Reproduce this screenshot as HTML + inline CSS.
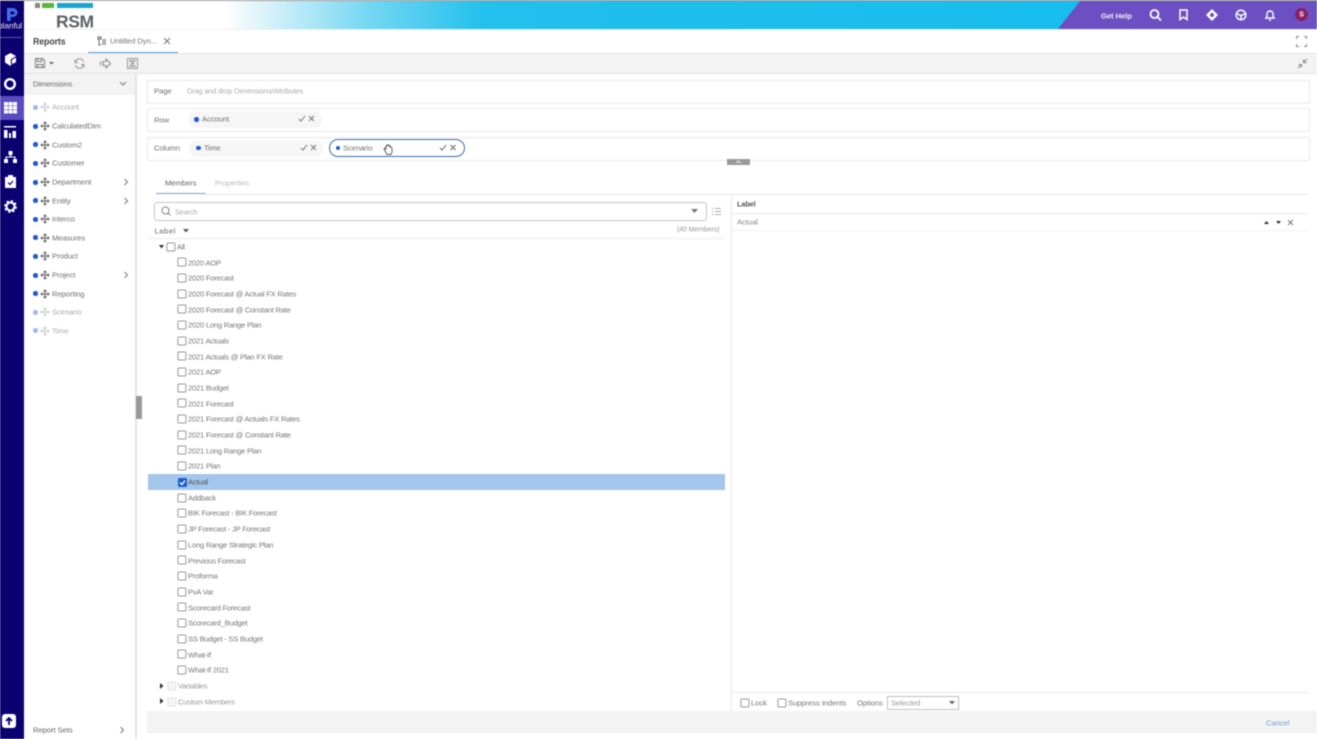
<!DOCTYPE html>
<html><head><meta charset="utf-8">
<style>
html,body{margin:0;padding:0;background:#fff;}
#p{position:relative;width:1317px;height:739px;overflow:hidden;background:#fff;font-family:"Liberation Sans",sans-serif;font-size:7.700px;letter-spacing:-.1px;color:#666;filter:blur(.4px);}
#p div,#p span,#p svg{position:absolute;}
.t{white-space:nowrap;line-height:12px;transform:translateY(.7px);}
.r{left:188px;white-space:nowrap;line-height:12px;color:#777;font-size:7.600px;letter-spacing:-.22px;transform:translateY(.7px);}
.c{left:178px;width:7px;height:7px;border:1px solid #9a9a9a;border-radius:1.500px;background:#fff;transform:translate(-.6px,-.5px);}
.d{left:33px;width:4.500px;height:4.500px;border-radius:50%;background:#1f5bd0;}
.dl{left:33px;width:4.500px;height:4.500px;border-radius:50%;background:#a3bbec;}
.n{left:52px;white-space:nowrap;line-height:12px;color:#707070;transform:translateY(.7px);}
.nl{left:52px;white-space:nowrap;line-height:12px;color:#aaa;transform:translateY(.7px);}
.m{left:40px;width:10px;height:10px;}
.box{left:147px;right:7px;height:22px;border:1px solid #e8e8e8;border-radius:2px;background:#fff;}
.chip{height:17px;border-radius:9px;background:#f6f6f6;}
.dot{width:4.500px;height:4.500px;border-radius:50%;background:#1f5bd0;}
</style></head><body>
<div id="p">
<!-- header -->
<div style="left:0;top:0;width:1317px;height:1px;background:#999"></div>
<div style="left:215px;top:1px;width:1102px;height:28px;background:linear-gradient(90deg,#fff 0,#fff 10px,#c6edf8 70px,#6fd6f2 160px,#22c0ed 270px,#12bcec 100%)"></div>
<svg style="left:1050px;top:1px" width="267" height="28"><polygon points="8,28 30,0 267,0 267,28" fill="#6c4fc2"/></svg>
<div style="left:0;top:29px;width:1317px;height:1px;background:#eee"></div>
<!-- logo -->
<div style="left:35px;top:3px;width:5px;height:5px;background:#888"></div>
<div style="left:42px;top:3px;width:12px;height:5px;background:#5cb33f"></div>
<div style="left:57px;top:3px;width:36px;height:5px;background:#1ba5cf"></div>
<div class="t" style="left:56px;top:11px;font-size:17.500px;line-height:20px;font-weight:bold;color:#5d6367;letter-spacing:-.4px">RSM</div>
<!-- header right -->
<div class="t" style="left:1101px;top:9.500px;color:#eee;font-weight:bold;font-size:7.700px">Get Help</div>
<svg style="left:1149px;top:8px" width="13" height="14" fill="none" stroke="#fff" stroke-width="1.800"><circle cx="5.500" cy="6" r="4"/><path d="M8.500 9l3.500 3.500"/></svg>
<svg style="left:1178px;top:9px" width="11" height="12" fill="none" stroke="#fff" stroke-width="1.500"><path d="M2 1h7v9.500L5.500 8 2 10.500z"/></svg>
<svg style="left:1206px;top:9px" width="12" height="12"><path d="M6 0L12 6 6 12 0 6z" fill="#fff"/><circle cx="6" cy="6" r="2" fill="#6c4fc2"/></svg>
<svg style="left:1235px;top:9px" width="12" height="12" fill="none" stroke="#fff" stroke-width="1.500"><circle cx="6" cy="6" r="4.800"/><path d="M1.500 4.500L6 6.500l4.500-2M6 6.500V11"/></svg>
<svg style="left:1264px;top:9px" width="12" height="12" fill="none" stroke="#fff" stroke-width="1.400"><path d="M2 9c1-1 1-2 1-4a3 3 0 016 0c0 2 0 3 1 4zM5 11h2"/></svg>
<div style="left:1295px;top:8px;width:13px;height:13px;border-radius:50%;background:#8a1f63"></div>
<div class="t" style="left:1295px;top:8.500px;width:13px;text-align:center;color:#fff;font-size:7px;font-weight:bold">S</div>
<!-- tabs -->
<div class="t" style="left:33px;top:34.500px;font-size:8.800px;font-weight:bold;color:#444">Reports</div>
<svg style="left:97px;top:36px" width="10" height="10" fill="none" stroke="#666"><path d="M1 1h3v2H1zM5 4h4M5 6h4M5 8h4M2 3v6h2"/></svg>
<div class="t" style="left:110px;top:35px;color:#777">Untitled Dyn...</div>
<svg style="left:163px;top:37px" width="8" height="8" stroke="#777" fill="none"><path d="M1 1l6 6M7 1L1 7"/></svg>
<div style="left:88px;top:52px;width:90px;height:1px;background:#5b9bd5"></div>
<div style="left:0;top:53px;width:1317px;height:1px;background:#e6e6e6"></div>
<svg style="left:1296px;top:36px" width="11" height="11" fill="none" stroke="#888"><path d="M.5 3V.5H3M8 .5h2.500V3M10.500 8v2.500H8M3 10.500H.5V8"/></svg>
<!-- toolbar -->
<div style="left:24px;top:54px;width:1293px;height:19px;background:#f3f3f3;border-bottom:1px solid #e3e3e3"></div>
<svg style="left:35px;top:58px" width="20" height="10" fill="none" stroke="#777"><path d="M.5.500h7l2 2v7h-9z"/><path d="M2.500 .5v3h4v-3M2.500 9.500v-3h5v3"/><path d="M14 4h5l-2.500 2.500z" fill="#666" stroke="none"/></svg>
<svg style="left:74px;top:58px" width="11" height="11" fill="none" stroke="#999"><path d="M9.500 4A4 4 0 002 3L1 4.500M1.500 7A4 4 0 009 8l1-1.500M1 1.500v3h3M10 9.500v-3H7"/></svg>
<svg style="left:100px;top:58px" width="11" height="11" fill="none" stroke="#888"><path d="M3 3.500h3V1l4.500 4.500L6 10V7.500H3zM.5 3.500v4"/></svg>
<svg style="left:127px;top:58px" width="11" height="11" fill="none" stroke="#999"><rect x=".5" y=".5" width="10" height="10" fill="#eee"/><path d="M3 2.500h5L5.500 5.500 8 8.500H3l2.500-3z"/></svg>
<svg style="left:1297px;top:58px" width="11" height="11" fill="none" stroke="#888"><path d="M10 1L6.500 4.500M6.500 1.500v3h3M1 10l3.500-3.500M1.500 6.500h3v3"/></svg>
<!-- left rail -->
<div style="left:0;top:1px;width:24px;height:738px;background:#0c0070"></div>
<svg style="left:5px;top:7px" width="13" height="15"><path d="M2 1h6a4.500 4.500 0 010 9H5.500v4H2z" fill="#3f6fe8"/><path d="M5.500 4.500H8a1.500 1.500 0 010 3H5.500z" fill="#0c0070"/></svg>
<div class="t" style="left:-2px;top:19.500px;color:#e8e8f5;font-size:8.200px;width:26px;overflow:hidden;letter-spacing:0">planful</div>
<div style="left:0;top:37px;width:22px;height:1px;background:#5a5a9a"></div>
<div style="left:0;top:96px;width:24px;height:24px;background:#5a4cc0"></div>
<svg style="left:4px;top:53px" width="13" height="13"><path d="M6.500 0l5.500 3v6.500L6.500 13 1 9.500V3z" fill="#fff"/><path d="M6.500 6.500L12 3v6.500L7 13z" fill="#0c0070" opacity=".85"/><path d="M8 7l4-2.500v4.500L8 11z" fill="#fff"/></svg>
<svg style="left:3px;top:77px" width="14" height="14" fill="none" stroke="#fff" stroke-width="2.400"><circle cx="7" cy="7" r="4.800"/></svg>
<svg style="left:4px;top:102px" width="13" height="12" fill="#fff"><path d="M0 0h4v3.500H0zM4.500 0h4v3.500h-4zM9 0h4v3.500H9zM0 4h4v3.500H0zM4.500 4h4v3.500h-4zM9 4h4v3.500H9zM0 8h4v3.500H0zM4.500 8h4v3.500h-4zM9 8h4v3.500H9z"/></svg>
<svg style="left:4px;top:126px" width="12" height="12" fill="#fff"><path d="M0 0h12v1.500H0zM0 4h3.500v8H0zM5 7h2v5H5zM8.500 5H12v7H8.500z"/></svg>
<svg style="left:4px;top:151px" width="13" height="12" fill="#fff"><path d="M4.500 0h4v4H7v1.500h4.500V8H13v4H9V8h1.500V6.500h-8V8H4v4H0V8h1.500V5.500H6V4H4.500z"/></svg>
<svg style="left:5px;top:175px" width="11" height="13"><path d="M0 2h3V0h5v2h3v11H0z" fill="#fff"/><path d="M3 7.500l2 2 3-3.500" fill="none" stroke="#0c0070" stroke-width="1.200"/></svg>
<svg style="left:4px;top:200px" width="13" height="13"><circle cx="6.500" cy="6.500" r="4" fill="none" stroke="#fff" stroke-width="2"/><circle cx="6.500" cy="6.500" r="5.600" fill="none" stroke="#fff" stroke-width="1.600" stroke-dasharray="2.400 2"/></svg>
<div style="left:2px;top:714px;width:14px;height:14px;border-radius:3px;background:#fff"></div>
<svg style="left:4px;top:716px" width="10" height="10" fill="none" stroke="#0c0070" stroke-width="1.800"><path d="M5 9V2M2 5l3-3 3 3"/></svg>
<!-- sidebar -->
<div style="left:24px;top:74px;width:111px;height:21px;background:#f3f3f3"></div>
<div class="t" style="left:33px;top:78px;color:#666">Dimensions</div>
<svg style="left:119px;top:81px" width="8" height="6" fill="none" stroke="#777"><path d="M1 1l3 3 3-3"/></svg>
<div style="left:135px;top:74px;width:1.500px;height:665px;background:#e2e2e2"></div>
<div style="left:135.500px;top:396px;width:6px;height:23px;background:#999"></div>

<div class="dl" style="top:105px"></div><div class="nl" style="top:101px">Account</div>
<div class="d" style="top:124px"></div><div class="n" style="top:120px">CalculatedDim</div>
<div class="d" style="top:142px"></div><div class="n" style="top:138.500px">Custom2</div>
<div class="d" style="top:161px"></div><div class="n" style="top:157px">Customer</div>
<div class="d" style="top:180px"></div><div class="n" style="top:176px">Department</div>
<div class="d" style="top:198px"></div><div class="n" style="top:194.500px">Entity</div>
<div class="d" style="top:217px"></div><div class="n" style="top:213px">Interco</div>
<div class="d" style="top:235px"></div><div class="n" style="top:232px">Measures</div>
<div class="d" style="top:254px"></div><div class="n" style="top:250px">Product</div>
<div class="d" style="top:273px"></div><div class="n" style="top:269px">Project</div>
<div class="d" style="top:291px"></div><div class="n" style="top:287.500px">Reporting</div>
<div class="dl" style="top:310px"></div><div class="nl" style="top:306px">Scenario</div>
<div class="dl" style="top:328px"></div><div class="nl" style="top:324.500px">Time</div>

<svg class="m" style="top:102px" fill="none" stroke="#ccc"><path d="M5 1v8M1 5h8M3.500 2.500L5 1l1.500 1.500M3.500 7.500L5 9l1.500-1.500M2.500 3.500L1 5l1.500 1.500M7.500 3.500L9 5 7.500 6.500"/></svg>
<svg class="m" style="top:121px" fill="none" stroke="#666"><path d="M5 1v8M1 5h8M3.500 2.500L5 1l1.500 1.500M3.500 7.500L5 9l1.500-1.500M2.500 3.500L1 5l1.500 1.500M7.500 3.500L9 5 7.500 6.500"/></svg>
<svg class="m" style="top:139.500px" fill="none" stroke="#666"><path d="M5 1v8M1 5h8M3.500 2.500L5 1l1.500 1.500M3.500 7.500L5 9l1.500-1.500M2.500 3.500L1 5l1.500 1.500M7.500 3.500L9 5 7.500 6.500"/></svg>
<svg class="m" style="top:158px" fill="none" stroke="#666"><path d="M5 1v8M1 5h8M3.500 2.500L5 1l1.500 1.500M3.500 7.500L5 9l1.500-1.500M2.500 3.500L1 5l1.500 1.500M7.500 3.500L9 5 7.500 6.500"/></svg>
<svg class="m" style="top:177px" fill="none" stroke="#666"><path d="M5 1v8M1 5h8M3.500 2.500L5 1l1.500 1.500M3.500 7.500L5 9l1.500-1.500M2.500 3.500L1 5l1.500 1.500M7.500 3.500L9 5 7.500 6.500"/></svg>
<svg class="m" style="top:195.500px" fill="none" stroke="#666"><path d="M5 1v8M1 5h8M3.500 2.500L5 1l1.500 1.500M3.500 7.500L5 9l1.500-1.500M2.500 3.500L1 5l1.500 1.500M7.500 3.500L9 5 7.500 6.500"/></svg>
<svg class="m" style="top:214px" fill="none" stroke="#666"><path d="M5 1v8M1 5h8M3.500 2.500L5 1l1.500 1.500M3.500 7.500L5 9l1.500-1.500M2.500 3.500L1 5l1.500 1.500M7.500 3.500L9 5 7.500 6.500"/></svg>
<svg class="m" style="top:233px" fill="none" stroke="#666"><path d="M5 1v8M1 5h8M3.500 2.500L5 1l1.500 1.500M3.500 7.500L5 9l1.500-1.500M2.500 3.500L1 5l1.500 1.500M7.500 3.500L9 5 7.500 6.500"/></svg>
<svg class="m" style="top:251px" fill="none" stroke="#666"><path d="M5 1v8M1 5h8M3.500 2.500L5 1l1.500 1.500M3.500 7.500L5 9l1.500-1.500M2.500 3.500L1 5l1.500 1.500M7.500 3.500L9 5 7.500 6.500"/></svg>
<svg class="m" style="top:270px" fill="none" stroke="#666"><path d="M5 1v8M1 5h8M3.500 2.500L5 1l1.500 1.500M3.500 7.500L5 9l1.500-1.500M2.500 3.500L1 5l1.500 1.500M7.500 3.500L9 5 7.500 6.500"/></svg>
<svg class="m" style="top:288.500px" fill="none" stroke="#666"><path d="M5 1v8M1 5h8M3.500 2.500L5 1l1.500 1.500M3.500 7.500L5 9l1.500-1.500M2.500 3.500L1 5l1.500 1.500M7.500 3.500L9 5 7.500 6.500"/></svg>
<svg class="m" style="top:307px" fill="none" stroke="#ccc"><path d="M5 1v8M1 5h8M3.500 2.500L5 1l1.500 1.500M3.500 7.500L5 9l1.500-1.500M2.500 3.500L1 5l1.500 1.500M7.500 3.500L9 5 7.500 6.500"/></svg>
<svg class="m" style="top:325.500px" fill="none" stroke="#ccc"><path d="M5 1v8M1 5h8M3.500 2.500L5 1l1.500 1.500M3.500 7.500L5 9l1.500-1.500M2.500 3.500L1 5l1.500 1.500M7.500 3.500L9 5 7.500 6.500"/></svg>

<svg style="left:123px;top:178px" width="6" height="8" fill="none" stroke="#777"><path d="M1.500 1l3 3-3 3"/></svg>
<svg style="left:123px;top:197px" width="6" height="8" fill="none" stroke="#777"><path d="M1.500 1l3 3-3 3"/></svg>
<svg style="left:123px;top:271px" width="6" height="8" fill="none" stroke="#777"><path d="M1.500 1l3 3-3 3"/></svg>
<div class="t" style="left:33px;top:724px;color:#666">Report Sets</div>
<svg style="left:119px;top:726px" width="6" height="8" fill="none" stroke="#777"><path d="M1.500 1l3 3-3 3"/></svg>

<!-- drop boxes -->
<div class="box" style="top:80px"></div>
<div class="box" style="top:108px"></div>
<div class="box" style="top:137px"></div>
<div class="t" style="left:154px;top:85px;color:#707070">Page</div>
<div class="t" style="left:187px;top:85px;color:#aaa;font-size:7.300px">Drag and drop Dimensions/Attributes</div>
<div class="t" style="left:154px;top:113.500px;color:#707070">Row</div>
<div class="t" style="left:154px;top:142px;color:#707070">Column</div>
<div class="chip" style="left:188px;top:111px;width:134px"></div>
<div class="dot" style="left:194px;top:117px"></div>
<div class="t" style="left:202px;top:113px;color:#707070">Account</div>
<svg style="left:298px;top:115px" width="18" height="8" fill="none" stroke="#777"><path d="M1 4l2 2 4-5"/><path d="M11 1l5 5M16 1l-5 5"/></svg>
<div class="chip" style="left:189px;top:139.500px;width:134px"></div>
<div class="dot" style="left:196px;top:145.500px"></div>
<div class="t" style="left:204px;top:142px;color:#707070">Time</div>
<svg style="left:300px;top:144px" width="18" height="8" fill="none" stroke="#777"><path d="M1 4l2 2 4-5"/><path d="M11 1l5 5M16 1l-5 5"/></svg>
<div style="left:329px;top:139px;width:134px;height:16px;border:1.300px solid #3b6ea8;border-radius:9px;background:#fff"></div>
<div class="dot" style="left:335.500px;top:145.500px"></div>
<div class="t" style="left:343px;top:142px;color:#707070">Scenario</div>
<svg style="left:439px;top:144px" width="19" height="8" fill="none" stroke="#666"><path d="M1 4l2 2 4-5"/><path d="M11.500 1l5 5M16.500 1l-5 5"/></svg>
<svg style="left:383px;top:143px" width="11" height="13" fill="#fff" stroke="#555" stroke-width=".9"><path d="M2 8L1 6l1-1 1 1V3h1V2h1v0h1v1h1v1h1l1 1v4l-1 2.500H4z"/></svg>
<div style="left:727px;top:159px;width:23px;height:6px;background:#999"></div>
<svg style="left:735px;top:160px" width="7" height="4" fill="none" stroke="#eee"><path d="M1 3l2.500-2L6 3"/></svg>
<!-- tabs -->
<div class="t" style="left:165px;top:177px;color:#666">Members</div>
<div class="t" style="left:215px;top:177px;color:#bbb">Properties</div>
<div style="left:156px;top:193px;width:50px;height:1px;background:#7aa6dc"></div>
<div style="left:206px;top:194px;width:1102px;height:1px;background:#e6e6e6"></div>
<!-- search -->
<div style="left:154px;top:202px;width:551px;height:17px;border:1px solid #c6c6c6;border-radius:3px;background:#fff"></div>
<svg style="left:161px;top:206px" width="10" height="10" fill="none" stroke="#888"><circle cx="4.500" cy="4.500" r="3.500"/><path d="M7 7l2.500 2.500"/></svg>
<div class="t" style="left:175px;top:206px;color:#aaa;font-size:7.300px">Search</div>
<svg style="left:691px;top:209px" width="7" height="4"><path d="M0 0h7L3.500 4z" fill="#777"/></svg>
<svg style="left:712px;top:207px" width="9" height="9" fill="none" stroke="#aaa"><path d="M0 1.500h1.500M3 1.500h6M0 4.500h1.500M3 4.500h6M0 7.500h1.500M3 7.500h6"/></svg>
<div class="t" style="left:154.500px;top:225px;color:#666;letter-spacing:.5px">Label</div>
<svg style="left:183px;top:229px" width="6" height="4"><path d="M0 0h6L3 3.500z" fill="#555"/></svg>
<div class="t" style="left:677px;top:224px;color:#999;font-size:7px">(40 Members)</div>
<div style="left:147px;top:238px;width:578px;height:1px;background:#ededed"></div>
<!-- tree -->
<svg style="left:158.500px;top:245px" width="5" height="4"><path d="M0 0h5L2.500 3.500z" fill="#333"/></svg>
<div class="c" style="left:167px;top:243px"></div><div class="r" style="left:177px;top:241px">All</div>
<div class="c" style="top:258px"></div><div class="r" style="top:256.500px">2020 AOP</div>
<div class="c" style="top:274px"></div><div class="r" style="top:272px">2020 Forecast</div>
<div class="c" style="top:289.500px"></div><div class="r" style="top:288px">2020 Forecast @ Actual FX Rates</div>
<div class="c" style="top:305px"></div><div class="r" style="top:303.500px">2020 Forecast @ Constant Rate</div>
<div class="c" style="top:321px"></div><div class="r" style="top:319px">2020 Long Range Plan</div>
<div class="c" style="top:336.500px"></div><div class="r" style="top:335px">2021 Actuals</div>
<div class="c" style="top:352px"></div><div class="r" style="top:350.500px">2021 Actuals @ Plan FX Rate</div>
<div class="c" style="top:368px"></div><div class="r" style="top:366px">2021 AOP</div>
<div class="c" style="top:383.500px"></div><div class="r" style="top:382px">2021 Budget</div>
<div class="c" style="top:399px"></div><div class="r" style="top:397.500px">2021 Forecast</div>
<div class="c" style="top:415px"></div><div class="r" style="top:413px">2021 Forecast @ Actuals FX Rates</div>
<div class="c" style="top:430.500px"></div><div class="r" style="top:429px">2021 Forecast @ Constant Rate</div>
<div class="c" style="top:446px"></div><div class="r" style="top:444.500px">2021 Long Range Plan</div>
<div class="c" style="top:462px"></div><div class="r" style="top:460px">2021 Plan</div>
<div style="left:148px;top:474px;width:577px;height:16px;background:#a2c6ec"></div>
<div style="left:178px;top:478px;width:7px;height:7px;background:#1c5fc8;border-radius:1.500px;border:.5px solid #1c5fc8"></div>
<svg style="left:177.500px;top:477.500px" width="9" height="9" fill="none" stroke="#fff" stroke-width="1.300"><path d="M2 4.500l2 2 3-4"/></svg>
<div class="r" style="top:476px;color:#555">Actual</div>
<div class="c" style="top:493.500px"></div><div class="r" style="top:491.500px">Addback</div>
<div class="c" style="top:509px"></div><div class="r" style="top:507px">BIK Forecast - BIK Forecast</div>
<div class="c" style="top:525px"></div><div class="r" style="top:523px">JP Forecast - JP Forecast</div>
<div class="c" style="top:540.500px"></div><div class="r" style="top:539px">Long Range Strategic Plan</div>
<div class="c" style="top:556px"></div><div class="r" style="top:554.500px">Previous Forecast</div>
<div class="c" style="top:572px"></div><div class="r" style="top:570px">Proforma</div>
<div class="c" style="top:587.500px"></div><div class="r" style="top:586px">PvA Var</div>
<div class="c" style="top:603px"></div><div class="r" style="top:601.500px">Scorecard Forecast</div>
<div class="c" style="top:619px"></div><div class="r" style="top:617px">Scorecard_Budget</div>
<div class="c" style="top:634.500px"></div><div class="r" style="top:633px">SS Budget - SS Budget</div>
<div class="c" style="top:650px"></div><div class="r" style="top:648.500px">What-If</div>
<div class="c" style="top:666px"></div><div class="r" style="top:664px">What-If 2021</div>
<svg style="left:160px;top:683px" width="4" height="6"><path d="M0 0l3.500 3L0 6z" fill="#333"/></svg>
<div class="c" style="left:168px;top:682px;border-color:#e3e3e3;background:#f6f6f6"></div><div class="r" style="left:178px;top:680px;color:#999">Variables</div>
<svg style="left:160px;top:698px" width="4" height="6"><path d="M0 0l3.500 3L0 6z" fill="#333"/></svg>
<div class="c" style="left:168px;top:698px;border-color:#e3e3e3;background:#f6f6f6"></div><div class="r" style="left:178px;top:695.500px;color:#999">Custom Members</div>
<!-- right pane -->
<div style="left:731px;top:195px;width:1px;height:516px;background:#e8e8e8"></div>
<div class="t" style="left:737px;top:198px;color:#555;font-weight:bold;font-size:7.300px">Label</div>
<div style="left:732px;top:213px;width:577px;height:1px;background:#ececec"></div>
<div class="t" style="left:737px;top:216px;color:#888">Actual</div>
<div style="left:732px;top:230px;width:577px;height:1px;background:#f0f0f0"></div>
<svg style="left:1264px;top:219px" width="30" height="7"><path d="M0 5h5L2.500 2zM12 2h5l-2.500 3z" fill="#333"/><path d="M24 1l5 5M29 1l-5 5" stroke="#777" fill="none"/></svg>
<div style="left:732px;top:692px;width:577px;height:1px;background:#e8e8e8"></div>
<div class="c" style="left:741px;top:699px"></div><div class="t" style="left:751px;top:697px;color:#777">Lock</div>
<div class="c" style="left:778px;top:699px"></div><div class="t" style="left:788px;top:697px;color:#777">Suppress Indents</div>
<div class="t" style="left:857px;top:697px;color:#777">Options</div>
<div style="left:887px;top:696px;width:70px;height:12px;border:1px solid #c0c0c0;background:#fff"></div>
<div class="t" style="left:891px;top:697px;color:#999">Selected</div>
<svg style="left:949px;top:701px" width="6" height="4"><path d="M0 0h6L3 3.500z" fill="#666"/></svg>
<!-- footer -->
<div style="left:147px;top:711px;width:1170px;height:21px;background:#f3f3f3;border-radius:2px"></div>
<div style="left:147px;top:732px;width:1170px;height:1px;background:#eee"></div>
<div class="t" style="left:1266px;top:716.500px;color:#7d9bcb">Cancel</div>
</div>
</body></html>
